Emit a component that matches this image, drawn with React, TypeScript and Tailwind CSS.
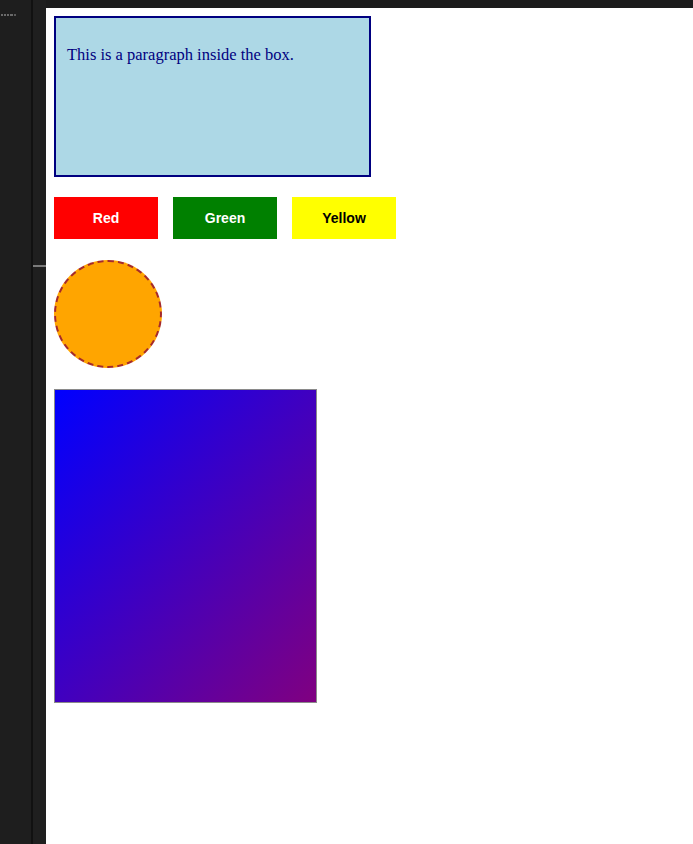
export default function App() {
  return (
    <div className="flex h-[844px] w-[693px] overflow-hidden bg-white">
      {/* left editor gutter */}
      <div className="flex h-full w-[46px] shrink-0">
        <div className="h-full w-[31px] bg-[#1e1e1e] pt-[14px] pl-[1px]">
          <div className="flex gap-[1px]">
            <span className="h-[2px] w-[2px] bg-[#6a6a6a]" />
            <span className="h-[2px] w-[2px] bg-[#6a6a6a]" />
            <span className="h-[2px] w-[2px] bg-[#6a6a6a]" />
            <span className="h-[2px] w-[3px] bg-[#6a6a6a]" />
            <span className="h-[2px] w-[2px] bg-[#5a5a5a]" />
          </div>
        </div>
        <div className="h-full w-[2px] bg-[#111111]" />
        <div className="h-full w-[13px] bg-[#1f1f1f] pt-[265px]">
          <div className="h-[2px] w-full bg-[#7a7a7a]" />
        </div>
      </div>

      <div className="flex flex-1 flex-col">
        <div className="h-[8px] w-full bg-[#1c1c1c]" />
        <div className="flex flex-1 flex-col items-start bg-white p-[8px]">
          <div className="h-[161px] w-[317px] border-2 border-[#000080] bg-[#add8e6] pl-[11px] pr-[10px] pt-[10px]">
            <p className="mt-[18px] font-['Liberation_Serif',serif] text-[16.5px] leading-[18px] text-[#000080]">
              This is a paragraph inside the box.
            </p>
          </div>

          <div className="mt-[20px] flex gap-[15px] font-['Liberation_Sans',Arial,sans-serif] text-[14px] font-bold">
            <div className="flex h-[42px] w-[104px] items-center justify-center bg-[#ff0000] text-white">Red</div>
            <div className="flex h-[42px] w-[104px] items-center justify-center bg-[#008000] text-white">Green</div>
            <div className="flex h-[42px] w-[104px] items-center justify-center bg-[#ffff00] text-black">Yellow</div>
          </div>

          <div className="mt-[21px] h-[108px] w-[108px] rounded-full border-2 border-dashed border-[#a52a2a] bg-[#ffa500]" />

          <div className="mt-[21px] h-[314px] w-[263px] border border-[#8a8a8a] bg-linear-to-br/srgb from-[#0000ff] to-[#800080]" />
        </div>
      </div>
    </div>
  );
}
